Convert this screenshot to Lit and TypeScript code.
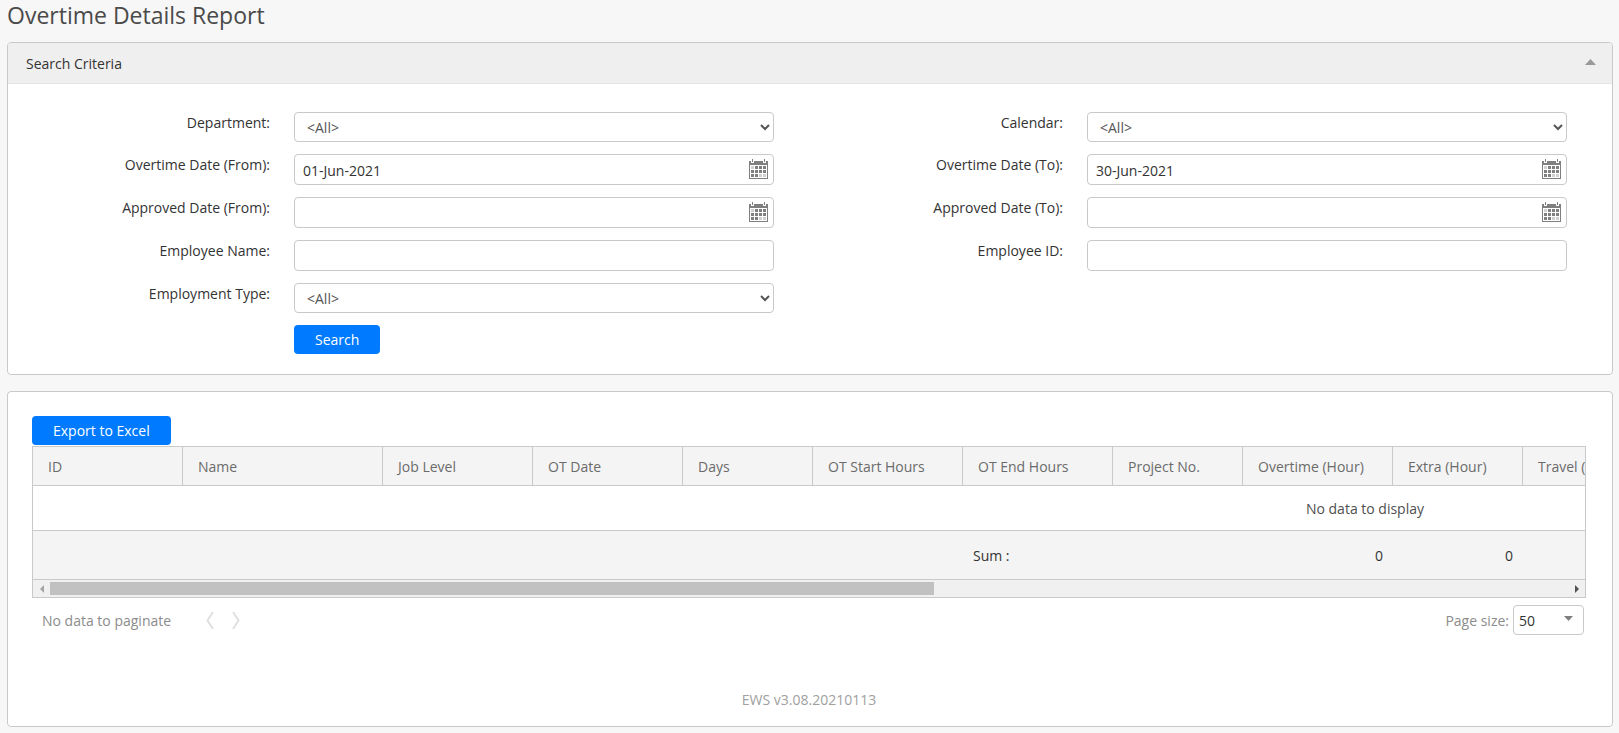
import { LitElement, html, css, svg, nothing } from "lit";
import { customElement, property, query, state } from "lit/decorators.js";
import { classMap } from "lit/directives/class-map.js";

type Field = {
  id: string;
  label: string;
  kind: "select" | "date" | "text";
  value?: string;
};

const FIELDS: (Field | null)[] = [
  { id: "department", label: "Department:", kind: "select", value: "<All>" },
  { id: "calendar", label: "Calendar:", kind: "select", value: "<All>" },
  { id: "ot-from", label: "Overtime Date (From):", kind: "date", value: "01-Jun-2021" },
  { id: "ot-to", label: "Overtime Date (To):", kind: "date", value: "30-Jun-2021" },
  { id: "ap-from", label: "Approved Date (From):", kind: "date" },
  { id: "ap-to", label: "Approved Date (To):", kind: "date" },
  { id: "emp-name", label: "Employee Name:", kind: "text" },
  { id: "emp-id", label: "Employee ID:", kind: "text" },
  { id: "emp-type", label: "Employment Type:", kind: "select", value: "<All>" },
  null,
];

type Column = { title: string; width: number; sum?: string; numeric?: boolean };

const COLUMNS: Column[] = [
  { title: "ID", width: 150 },
  { title: "Name", width: 200 },
  { title: "Job Level", width: 150 },
  { title: "OT Date", width: 150 },
  { title: "Days", width: 130 },
  { title: "OT Start Hours", width: 150 },
  { title: "OT End Hours", width: 150, sum: "Sum :" },
  { title: "Project No.", width: 130 },
  { title: "Overtime (Hour)", width: 150, sum: "0", numeric: true },
  { title: "Extra (Hour)", width: 130, sum: "0", numeric: true },
  { title: "Travel (Hour)", width: 130 },
  { title: "", width: 1044 },
];

const TABLE_WIDTH = COLUMNS.reduce((sum, c) => sum + c.width, 0);

@customElement("calendar-icon")
class CalendarIcon extends LitElement {
  static styles = css`
    :host { display: block; width: 19px; height: 20px; }
    svg { display: block; }
  `;

  render() {
    const cells = [];
    for (let row = 0; row < 3; row++) {
      for (let col = 0; col < 4; col++) {
        const light = (row === 0 && col === 0) || (row === 2 && col > 1);
        cells.push(svg`<rect x=${2 + col * 4} y=${7 + row * 4} width="3" height="3" fill=${light ? "#d0d0d0" : "#7f7f7f"} />`);
      }
    }
    return html`
      <svg width="19" height="20" viewBox="0 0 19 20" shape-rendering="crispEdges" aria-hidden="true">
        <path fill="#7f7f7f" d="M0 2h2v2h3V2h9v2h3V2h2v18H0zM1 6v13h17V6z" fill-rule="evenodd" />
        <path fill="#7f7f7f" d="M3 0h1v3H3zM15 0h1v3h-1z" />
        ${cells}
      </svg>
    `;
  }
}

@customElement("search-field")
class SearchField extends LitElement {
  @property({ attribute: false }) field!: Field;

  static styles = css`
    :host {
      display: grid;
      grid-template-columns: minmax(0, 1fr) minmax(0, 2fr);
      column-gap: 24px;
      align-items: start;
    }
    .label { text-align: right; line-height: 22px; color: #333; }
    .control {
      box-sizing: border-box;
      width: 100%;
      height: 31px;
      margin: 0;
      border: 1px solid #c9c9c9;
      border-radius: 4px;
      background: #fff;
      color: #333;
      font: inherit;
      padding: 0 8px;
      display: block;
    }
    .select { height: 30px; color: #555; }
    .date {
      display: flex;
      align-items: center;
      padding: 0 5px 0 8px;
    }
    .entry {
      flex: 1;
      min-width: 0;
      border: 0;
      padding: 2px 0 0;
      background: none;
      color: inherit;
      font: inherit;
      outline: none;
    }
    .picker { border: 0; padding: 0 0 1px; background: none; cursor: pointer; }
  `;

  private control() {
    const f = this.field;
    if (f.kind === "select") {
      return html`<select class="control select" id=${f.id}><option>${f.value}</option></select>`;
    }
    if (f.kind === "date") {
      return html`
        <div class="control date">
          <input class="entry" id=${f.id} type="text" .value=${f.value ?? ""} />
          <button class="picker" type="button" aria-label="Open calendar"><calendar-icon></calendar-icon></button>
        </div>
      `;
    }
    return html`<input class="control" id=${f.id} type="text" />`;
  }

  render() {
    return html`<label class="label" for=${this.field.id}>${this.field.label}</label>${this.control()}`;
  }
}

@customElement("report-grid")
class ReportGrid extends LitElement {
  @query(".view") private view!: HTMLElement;
  @state() private offset = 0;

  static styles = css`
    :host { display: block; border: 1px solid #c9c9c9; }
    .view { overflow: hidden; }
    .grid { table-layout: fixed; border-collapse: separate; border-spacing: 0; }
    .head {
      box-sizing: border-box;
      height: 39px;
      padding: 2px 15px 0;
      text-align: left;
      font-weight: 400;
      color: #6b6b6b;
      background: #f4f4f4;
      border-right: 1px solid #c9c9c9;
      border-bottom: 1px solid #c9c9c9;
      white-space: nowrap;
    }
    .empty {
      box-sizing: border-box;
      height: 45px;
      padding: 2px 0 0;
      text-align: center;
      color: #4f4f4f;
      border-bottom: 1px solid #c9c9c9;
    }
    .sum {
      box-sizing: border-box;
      height: 49px;
      padding: 2px 10px 0;
      color: #333;
      background: #f4f4f4;
      border-bottom: 1px solid #c9c9c9;
    }
    .numeric { text-align: right; }
    .bar { display: flex; align-items: center; height: 17px; background: #f0f0f0; }
    .step { display: grid; place-items: center; width: 17px; height: 17px; border: 0; padding: 0; background: none; color: #505050; }
    .step:disabled { color: #a3a3a3; }
    .track { flex: 1; display: flex; }
    .thumb { height: 13px; background: #c1c1c1; }
  `;

  private scroll(delta: number) {
    this.view.scrollLeft += delta;
    this.offset = this.view.scrollLeft;
  }

  render() {
    const thumb = (1552 / TABLE_WIDTH) * 100;
    return html`
      <div class="view">
        <table class="grid" style="width:${TABLE_WIDTH}px">
          <colgroup>${COLUMNS.map((c) => html`<col style="width:${c.width}px" />`)}</colgroup>
          <thead>
            <tr>${COLUMNS.map((c) => html`<th class="head">${c.title}</th>`)}</tr>
          </thead>
          <tbody>
            <tr><td class="empty" colspan=${COLUMNS.length}>No data to display</td></tr>
          </tbody>
          <tfoot>
            <tr>${COLUMNS.map((c) => html`<td class=${classMap({ sum: true, numeric: !!c.numeric })}>${c.sum ?? nothing}</td>`)}</tr>
          </tfoot>
        </table>
      </div>
      <div class="bar">
        <button class="step" type="button" aria-label="Scroll left" ?disabled=${this.offset === 0} @click=${() => this.scroll(-120)}>
          <svg width="4" height="8" viewBox="0 0 4 8"><path d="M4 0v8L0 4z" fill="currentColor" /></svg>
        </button>
        <div class="track">
          <div class="thumb" style="width:${thumb}%;margin-left:${(this.offset / TABLE_WIDTH) * 100}%"></div>
        </div>
        <button class="step" type="button" aria-label="Scroll right" @click=${() => this.scroll(120)}>
          <svg width="4" height="8" viewBox="0 0 4 8"><path d="M0 0v8l4-4z" fill="currentColor" /></svg>
        </button>
      </div>
    `;
  }
}

@customElement("app-root")
class AppRoot extends LitElement {
  @state() private open = true;

  static styles = css`
    :host {
      display: block;
      box-sizing: border-box;
      min-height: 100vh;
      padding: 0 6px 6px 7px;
      background: #f7f7f7;
      color: #333;
      font: 14px/20px "Open Sans", "Noto Sans", sans-serif;
    }
    .title { margin: 0; padding-bottom: 12px; font-size: 23px; line-height: 30px; font-weight: 400; color: #4a4a4a; }
    .panel { background: #fff; border: 1px solid #c9c9c9; border-radius: 4px; }
    .panel-head {
      display: flex;
      align-items: center;
      justify-content: space-between;
      height: 40px;
      padding: 0 16px 0 18px;
      background: #efefef;
      border-bottom: 1px solid #e4e4e4;
      border-radius: 3px 3px 0 0;
    }
    .panel-title { margin: 0; padding-top: 2px; font-size: 14px; font-weight: 400; }
    .toggle { border: 0; padding: 0 0 3px; background: none; line-height: 0; }
    .criteria { padding: 28px 9px 20px; }
    .fields { display: grid; grid-template-columns: repeat(2, minmax(0, 1fr)); row-gap: 12px; }
    .cell { padding: 0 36px 0 13px; }
    .actions { display: grid; grid-template-columns: minmax(0, 1fr) minmax(0, 2fr); column-gap: 24px; }
    .button {
      justify-self: start;
      height: 29px;
      padding: 0 21px;
      border: 0;
      border-radius: 4px;
      background: #007bff;
      color: #fff;
      font: inherit;
      cursor: pointer;
    }
    .submit { grid-column: 2; }
    .results { display: grid; margin-top: 16px; padding: 24px 26px 16px 24px; }
    .table { margin-top: 1px; min-width: 0; }
    .pager { display: flex; align-items: center; padding: 7px 2px 0 10px; color: #8c8c8c; }
    .caption { padding-top: 2px; }
    .pages { display: flex; gap: 18px; margin-left: 35px; }
    .page { border: 0; padding: 0; background: none; line-height: 0; }
    .size { display: flex; align-items: center; gap: 4px; margin-left: auto; }
    .size-box { position: relative; }
    .size-select {
      display: block;
      box-sizing: border-box;
      width: 71px;
      height: 30px;
      padding: 2px 5px 0;
      appearance: none;
      border: 1px solid #c9c9c9;
      border-radius: 4px;
      background: #fff;
      color: #333;
      font: inherit;
    }
    .size-arrow { position: absolute; right: 11px; top: 11px; pointer-events: none; }
    .version { margin: 55px 0 0; text-align: center; color: #a0a0a0; }
  `;

  render() {
    return html`
      <h1 class="title">Overtime Details Report</h1>
      <section class="panel">
        <header class="panel-head">
          <h2 class="panel-title">Search Criteria</h2>
          <button class="toggle" type="button" aria-label="Toggle search criteria" @click=${() => (this.open = !this.open)}>
            <svg width="11" height="6" viewBox="0 0 11 6"><path d="M5.500 0L11 6H0z" fill="#999" /></svg>
          </button>
        </header>
        ${this.open
          ? html`
              <form class="criteria" @submit=${(e: Event) => e.preventDefault()}>
                <div class="fields">
                  ${FIELDS.map((f) => html`<div class="cell">${f ? html`<search-field .field=${f}></search-field>` : nothing}</div>`)}
                  <div class="cell actions"><button class="button submit" type="submit">Search</button></div>
                </div>
              </form>
            `
          : nothing}
      </section>
      <section class="panel results">
        <button class="button" type="button">Export to Excel</button>
        <report-grid class="table"></report-grid>
        <div class="pager">
          <span class="caption">No data to paginate</span>
          <div class="pages">
            <button class="page" type="button" disabled aria-label="Previous page">
              <svg width="8" height="17" viewBox="0 0 8 17"><path d="M7 0L1.500 8.500L7 17" fill="none" stroke="#e0e0e0" stroke-width="2" /></svg>
            </button>
            <button class="page" type="button" disabled aria-label="Next page">
              <svg width="8" height="17" viewBox="0 0 8 17"><path d="M1 0l5.500 8.500L1 17" fill="none" stroke="#e0e0e0" stroke-width="2" /></svg>
            </button>
          </div>
          <div class="size">
            <label class="caption" for="page-size">Page size:</label>
            <div class="size-box">
              <select class="size-select" id="page-size"><option>50</option></select>
              <svg class="size-arrow" width="9" height="5" viewBox="0 0 9 5"><path d="M0 0h9L4.500 5z" fill="#7f7f7f" /></svg>
            </div>
          </div>
        </div>
        <p class="version">EWS v3.08.20210113</p>
      </section>
    `;
  }
}
